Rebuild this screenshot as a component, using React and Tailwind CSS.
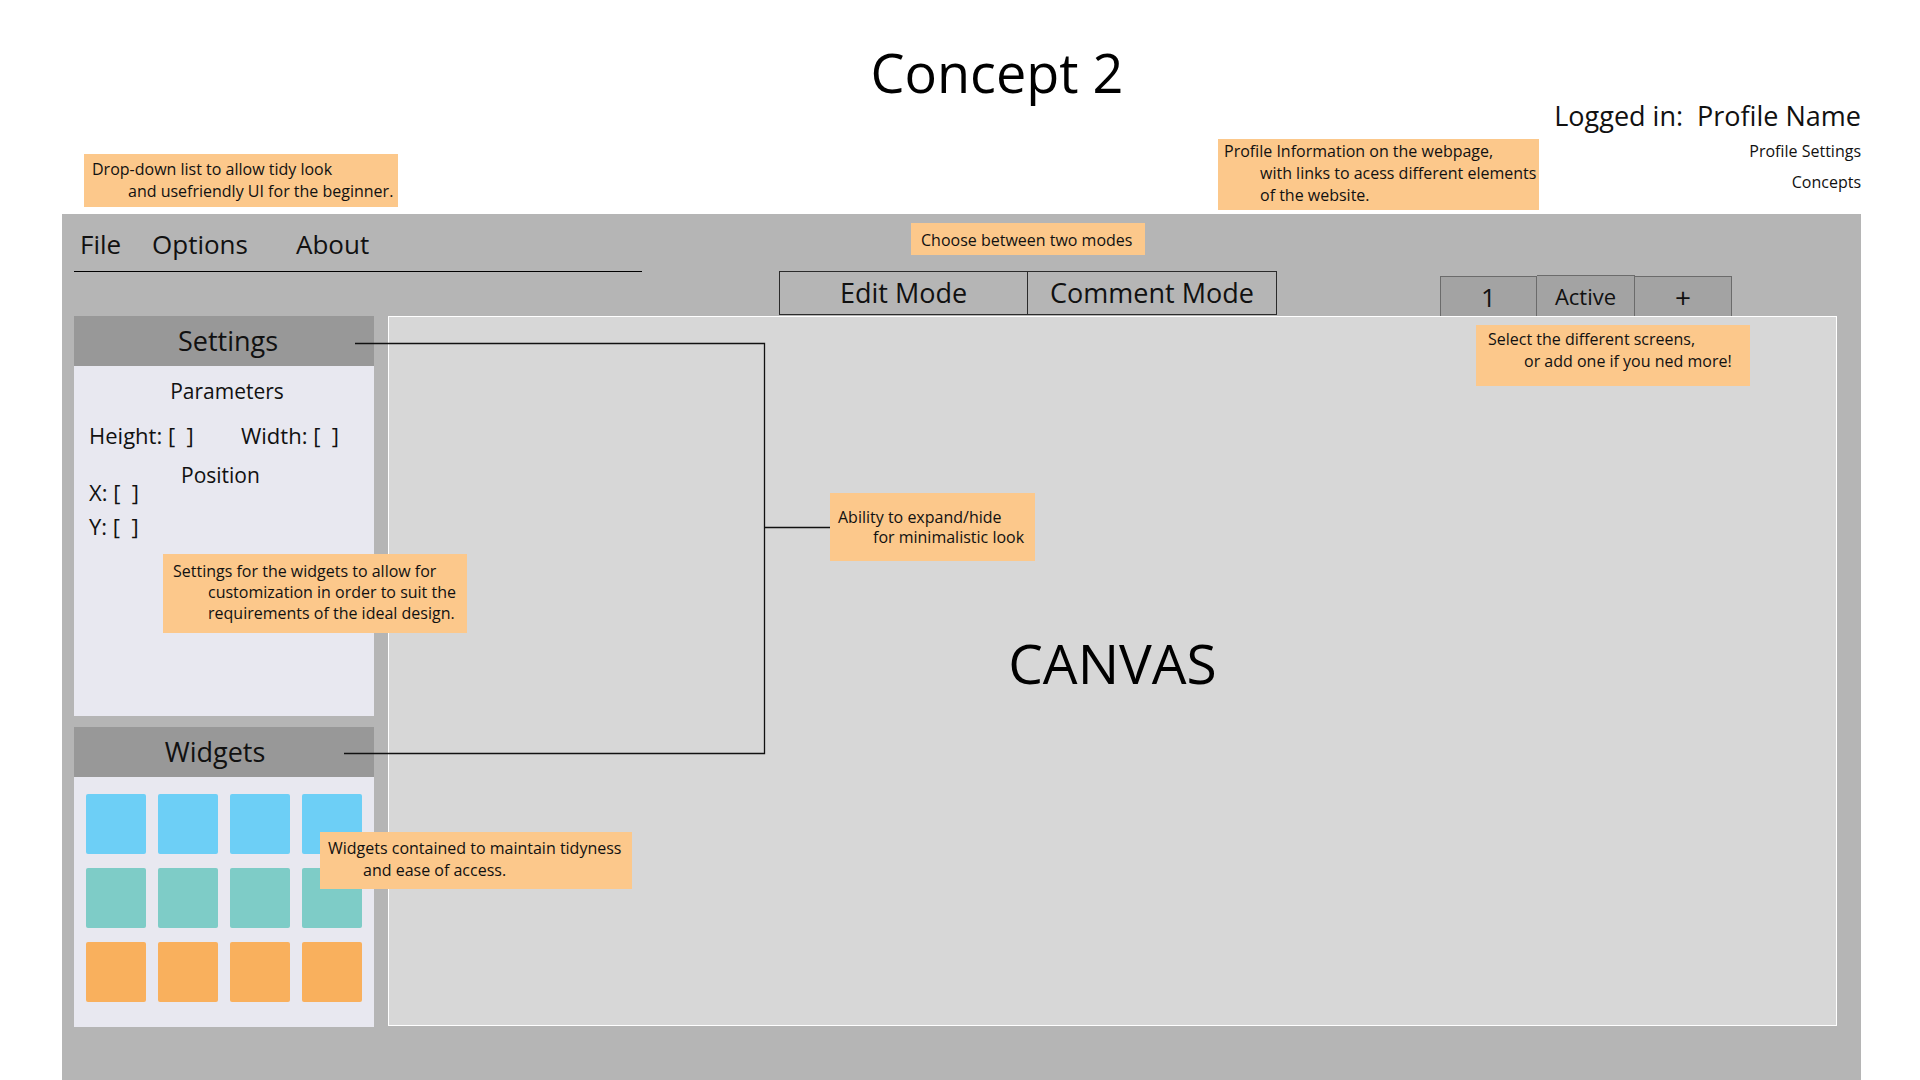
import React from "react";

function Note({ className, lines, lineClass = "leading-[22px]", indentClass = "pl-[36px]" }) {
  return (
    <div className={"absolute bg-[#fcc88b] text-[16px] text-[#111] whitespace-nowrap " + className}>
      {lines.map((l, i) => (
        <div key={i} className={lineClass + " " + (i > 0 ? indentClass : "")}>
          {l}
        </div>
      ))}
    </div>
  );
}

export default function App() {
  const tileBlue = "h-[60px] rounded-[2px] bg-[#6dcff6]";
  const tileTeal = "h-[60px] rounded-[2px] bg-[#7eccc7]";
  const tileOrange = "h-[60px] rounded-[2px] bg-[#f9b05d]";
  return (
    <div className="relative w-[1920px] h-[1080px] overflow-hidden bg-white text-[#111] font-['Open_Sans',sans-serif]">
      {/* Header */}
      <header className="h-[214px] flex flex-col">
        <h1 className="pt-[45px] pl-[74px] text-center text-[54px] leading-[54px] font-normal text-black">
          Concept 2
        </h1>
        <div className="self-end pr-[59px] mt-[3px] text-right">
          <div className="text-[27px] leading-[28px] whitespace-pre">Logged in:  Profile Name</div>
          <div className="mt-[6px] text-[16px] leading-[31px]">Profile Settings</div>
          <div className="text-[16px] leading-[31px]">Concepts</div>
        </div>
      </header>

      {/* App panel */}
      <div className="ml-[62px] w-[1799px] h-[866px] bg-[#b5b5b5] pl-[12px]">
        {/* Top row */}
        <div className="flex items-end h-[102px]">
          <nav className="w-[568px] mb-[44px] border-b border-black flex pl-[6px] pb-[11px] text-[26px] leading-[32px]">
            <span className="w-[72px]">File</span>
            <span className="w-[144px]">Options</span>
            <span>About</span>
          </nav>
          <div className="ml-[137px] mb-[1px] flex">
            <div className="w-[249px] h-[44px] border-[1.5px] border-[#2b2b2b] flex items-center justify-center text-[27px] leading-[32px]">
              Edit Mode
            </div>
            <div className="w-[249px] h-[44px] border-[1.5px] border-l-0 border-[#2b2b2b] flex items-center justify-center text-[27px] leading-[32px]">
              Comment Mode
            </div>
          </div>
          <div className="ml-[163px] flex items-end">
            <div className="w-[97px] h-[40px] border border-b-0 border-[#6b6b6b] bg-[#a3a3a3] flex items-center justify-center text-[26px] leading-[30px]">
              1
            </div>
            <div className="w-[98px] h-[41px] border border-l-0 border-b-0 border-[#6b6b6b] bg-[#a3a3a3] flex items-center justify-center text-[22px] leading-[30px]">
              Active
            </div>
            <div className="w-[97px] h-[40px] border border-l-0 border-b-0 border-[#6b6b6b] bg-[#a3a3a3] flex items-center justify-center text-[28px] leading-[30px]">
              +
            </div>
          </div>
        </div>

        {/* Main row */}
        <div className="flex gap-[14px]">
          <aside className="w-[300px] flex flex-col">
            <div className="h-[50px] bg-[#989898] flex items-center justify-center pl-[8px] text-[27px] leading-[34px]">
              Settings
            </div>
            <div className="h-[350px] bg-[#e8e8f0] pt-[10px]">
              <div className="text-center pl-[6px] text-[21px] leading-[30px]">Parameters</div>
              <div className="mt-[14px] flex pl-[15px] text-[22px] leading-[30px] whitespace-pre">
                <span className="w-[152px]">Height: [  ]</span>
                <span>Width: [  ]</span>
              </div>
              <div className="mt-[15px] pl-[107px] text-[21px] leading-[20px]">Position</div>
              <div className="-mt-[2px] pl-[15px] text-[22px] leading-[18px] whitespace-pre">X: [  ]</div>
              <div className="mt-[10px] pl-[15px] text-[22px] leading-[30px] whitespace-pre">Y: [  ]</div>
            </div>
            <div className="mt-[11px] h-[50px] bg-[#989898] flex items-center justify-center pr-[18px] text-[27px] leading-[34px]">
              Widgets
            </div>
            <div className="h-[250px] bg-[#e8e8f0] pt-[17px] pl-[12px] grid grid-cols-[repeat(4,60px)] gap-x-[12px] gap-y-[14px] content-start">
              <div className={tileBlue} />
              <div className={tileBlue} />
              <div className={tileBlue} />
              <div className={tileBlue} />
              <div className={tileTeal} />
              <div className={tileTeal} />
              <div className={tileTeal} />
              <div className={tileTeal} />
              <div className={tileOrange} />
              <div className={tileOrange} />
              <div className={tileOrange} />
              <div className={tileOrange} />
            </div>
          </aside>
          <main className="w-[1449px] h-[710px] bg-[#d7d7d7] border border-white flex items-center justify-center pb-[16px] text-[55px] leading-[60px] text-black">
            CANVAS
          </main>
        </div>
      </div>

      {/* Connector lines */}
      <svg className="absolute left-0 top-0 pointer-events-none" width="1920" height="1080">
        <path d="M355 343.5 H764.5 V753.5 H344" fill="none" stroke="#111" strokeWidth="1.3" />
        <path d="M764.5 527.5 H830" fill="none" stroke="#111" strokeWidth="1.3" />
      </svg>

      {/* Annotation notes */}
      <Note
        className="left-[84px] top-[154px] w-[314px] h-[53px] pt-[4px] pl-[8px]"
        lines={["Drop-down list to allow tidy look", "and usefriendly UI for the beginner."]}
      />
      <Note
        className="left-[1218px] top-[139px] w-[321px] h-[71px] pt-[1px] pl-[6px]"
        lines={["Profile Information on the webpage,", "with links to acess different elements", "of the website."]}
      />
      <Note className="left-[911px] top-[223px] w-[234px] h-[32px] pt-[6px] pl-[10px]" lines={["Choose between two modes"]} />
      <Note
        className="left-[1476px] top-[325px] w-[274px] h-[61px] pt-[3px] pl-[12px]"
        lines={["Select the different screens,", "or add one if you ned more!"]}
      />
      <Note
        className="left-[830px] top-[493px] w-[205px] h-[68px] pt-[14px] pl-[8px]"
        lineClass="leading-[20px]"
        indentClass="pl-[35px]"
        lines={["Ability to expand/hide", "for minimalistic look"]}
      />
      <Note
        className="left-[163px] top-[554px] w-[304px] h-[79px] pt-[7px] pl-[10px]"
        lineClass="leading-[21px]"
        indentClass="pl-[35px]"
        lines={["Settings for the widgets to allow for", "customization in order to suit the", "requirements of the ideal design."]}
      />
      <Note
        className="left-[320px] top-[832px] w-[312px] h-[57px] pt-[5px] pl-[8px]"
        indentClass="pl-[35px]"
        lines={["Widgets contained to maintain tidyness", "and ease of access."]}
      />
    </div>
  );
}
